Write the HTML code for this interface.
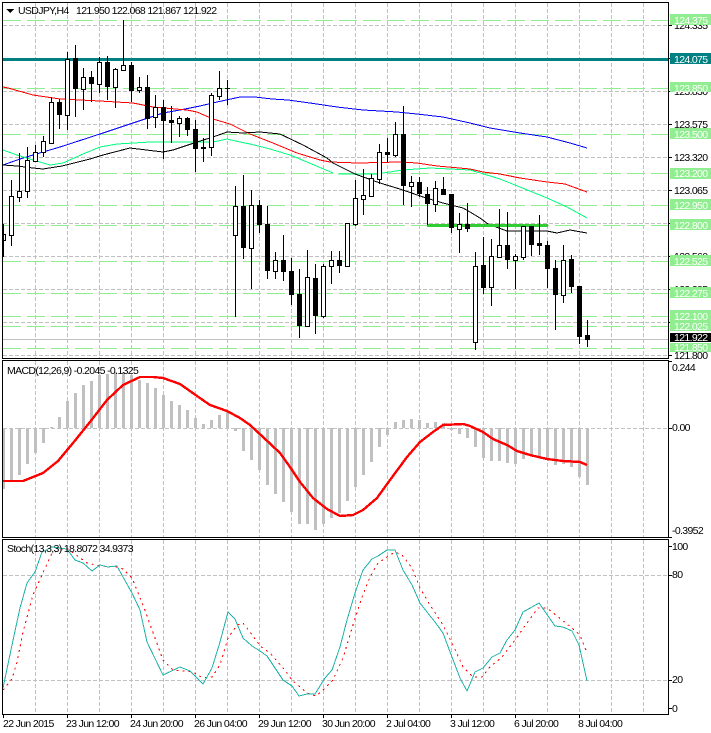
<!DOCTYPE html>
<html>
<head>
<meta charset="utf-8">
<style>
html,body{margin:0;padding:0;background:#fff;width:711px;height:733px;overflow:hidden}
svg{display:block}
text{font-family:"Liberation Sans",sans-serif;font-size:10.5px;letter-spacing:-.65px;fill:#000}
.w{fill:#fff}
</style>
</head>
<body>
<svg width="711" height="733" viewBox="0 0 711 733" xmlns="http://www.w3.org/2000/svg">
<rect width="711" height="733" fill="#fff"/>
<g shape-rendering="crispEdges" fill="none">
<!-- grids -->
<path stroke="#c0c0c0" stroke-dasharray="4 2" d="M3 25.5H668M3 58.5H668M3 91.5H668M3 124.5H668M3 157.5H668M3 190.5H668M3 223.5H668M3 256.5H668M3 289.5H668M3 322.5H668M3 355.5H668M3 428.5H668M3 575.5H668M3 680.5H668"/>
<path stroke="#c0c0c0" stroke-dasharray="4 2" d="M35.5 3V358M67.5 3V358M99.5 3V358M131.5 3V358M163.5 3V358M195.5 3V358M227.5 3V358M259.5 3V358M291.5 3V358M323.5 3V358M355.5 3V358M387.5 3V358M419.5 3V358M451.5 3V358M483.5 3V358M515.5 3V358M547.5 3V358M579.5 3V358M611.5 3V358M643.5 3V358M35.5 361V537M67.5 361V537M99.5 361V537M131.5 361V537M163.5 361V537M195.5 361V537M227.5 361V537M259.5 361V537M291.5 361V537M323.5 361V537M355.5 361V537M387.5 361V537M419.5 361V537M451.5 361V537M483.5 361V537M515.5 361V537M547.5 361V537M579.5 361V537M611.5 361V537M643.5 361V537M35.5 540V714M67.5 540V714M99.5 540V714M131.5 540V714M163.5 540V714M195.5 540V714M227.5 540V714M259.5 540V714M291.5 540V714M323.5 540V714M355.5 540V714M387.5 540V714M419.5 540V714M451.5 540V714M483.5 540V714M515.5 540V714M547.5 540V714M579.5 540V714M611.5 540V714M643.5 540V714"/>
<!-- horizontal objects -->
<path stroke="#90ee90" stroke-dasharray="18 6" d="M3 20.5H668M3 88.5H668M3 134.5H668M3 173.5H668M3 205.5H668M3 225.5H668M3 261.5H668M3 293.5H668M3 316.5H668M3 326.5H668M3 348.5H668"/>
<path stroke="#c0c0c0" d="M3 339.5H668"/>
<path stroke="#008080" stroke-width="3" d="M3 59.5H668"/>
<!-- moving averages -->
<polyline stroke="#0000ff" points="3,165 20,159 43,152 60,147 100,134 133,123 163,113 180,110 200,106 217,102 240,97 255,97 272,99 288,100 310,103 337,107 363,110 397,112 417,114 443,117 470,123 490,128 520,133 547,137 570,143 587,148"/>
<polyline stroke="#ff0000" points="3,87 8,88 33,95 60,99 100,101 133,103 153,107 187,110 197,112 213,119 230,124 240,129 250,134 273,143 297,153 320,160 330,162 358,163 400,162 417,163 437,166 470,169 483,172 500,174 520,178 547,182 565,184 587,192"/>
<polyline stroke="#00ff7f" points="3,150 17,155 33,160 50,165 63,163 83,154 100,147 117,144 150,142 187,142 213,142 227,139 240,142 250,144 270,149 290,155 307,162 333,173"/>
<polyline stroke="#00ff7f" points="338,174 375,174 383,173 403,170 430,168 470,170 487,175 500,179 520,187 547,198 567,207 587,218"/>
<polyline stroke="#000" points="3,165 17,166 33,168 43,169 62,166 90,159 103,155 130,148 163,152 173,150 197,142 213,137 227,132 243,133 260,132 280,134 303,145 327,158 333,163 355,174 380,183 403,190 423,197 443,203 463,208 470,212 480,218 488,224 507,231 547,231 557,233 570,230 587,233"/>
<path stroke="#32cd32" stroke-width="3" d="M427 225.5H548"/>
<!-- wicks -->
<path stroke="#000" d="M3.5 224V257M11.5 180V246M19.5 153V202M27.5 147V198M35.5 145V162M43.5 136V157M51.5 97V143M59.5 99V129M67.5 52V130M75.5 45V117M83.5 68V110M91.5 71V102M99.5 57V93M107.5 56V100M115.5 68V108M123.5 20V71M131.5 62V102M139.5 77V93M147.5 75V129M155.5 95V128M163.5 100V159M171.5 106V143M179.5 116V137M187.5 117V136M195.5 120V172M203.5 138V162M211.5 93V156M219.5 71V100M227.5 80V105M235.5 186V317M243.5 175V259M251.5 190V289M259.5 200V233M267.5 206V279M275.5 252V279M283.5 235V281M291.5 258V305M299.5 269V338M307.5 250V327M315.5 264V334M323.5 264V318M331.5 251V284M339.5 251V273M355.5 180V226M363.5 169V215M371.5 174V196M379.5 144V184M387.5 138V162M395.5 122V157M403.5 106V205M411.5 176V207M419.5 177V197M427.5 187V225M435.5 181V212M443.5 177V195M451.5 194V233M459.5 213V253M467.5 203V232M475.5 252V350M483.5 237V294M491.5 239V306M499.5 209V257M507.5 212V269M515.5 254V289M523.5 226V260M531.5 226V256M539.5 215V255M547.5 241V288M555.5 260V330M563.5 245V303M571.5 255V293M579.5 286V344M587.5 320V347"/>
<!-- white bodies -->
<path stroke="#000" fill="#fff" d="M3.5 234.5h2v6h-2zM9.5 196.5h4v39h-4zM17.5 191.5h4v6h-4zM25.5 160.5h4v31h-4zM33.5 152.5h4v9h-4zM41.5 141.5h4v11h-4zM49.5 102.5h4v41h-4zM65.5 59.5h4v56h-4zM81.5 77.5h4v12h-4zM97.5 62.5h4v22h-4zM113.5 69.5h4v18h-4zM121.5 65.5h4v5h-4zM137.5 87.5h4v3h-4zM153.5 107.5h4v10h-4zM177.5 118.5h4v5h-4zM209.5 95.5h4v52h-4zM217.5 88.5h4v8h-4zM233.5 206.5h4v29h-4zM249.5 205.5h4v43h-4zM273.5 260.5h4v11h-4zM305.5 277.5h4v49h-4zM321.5 266.5h4v50h-4zM329.5 260.5h4v6h-4zM345.5 223.5h4v43h-4zM353.5 198.5h4v26h-4zM361.5 195.5h4v4h-4zM369.5 178.5h4v18h-4zM377.5 152.5h4v27h-4zM393.5 134.5h4v21h-4zM409.5 182.5h4v4h-4zM433.5 188.5h4v16h-4zM457.5 224.5h4v5h-4zM473.5 266.5h4v76h-4zM489.5 256.5h4v31h-4zM497.5 245.5h4v12h-4zM513.5 256.5h4v4h-4zM521.5 226.5h4v31h-4zM561.5 260.5h4v35h-4z"/>
<!-- black bodies -->
<path fill="#000" d="M57 102h5v13h-5zM73 58h5v31h-5zM89 77h5v7h-5zM105 62h5v25h-5zM129 65h5v26h-5zM145 87h5v32h-5zM161 107h5v14h-5zM169 120h5v3h-5zM185 118h5v12h-5zM193 129h5v20h-5zM201 147h5v2h-5zM225 88h5v1h-5zM241 206h5v42h-5zM257 205h5v20h-5zM265 224h5v47h-5zM281 260h5v12h-5zM289 271h5v24h-5zM297 294h5v32h-5zM313 278h5v38h-5zM337 260h5v6h-5zM385 152h5v3h-5zM401 134h5v52h-5zM417 182h5v12h-5zM425 194h5v10h-5zM441 189h5v6h-5zM449 194h5v34h-5zM465 224h5v5h-5zM481 265h5v23h-5zM505 245h5v15h-5zM529 226h5v19h-5zM537 243h5v3h-5zM545 245h5v24h-5zM553 268h5v27h-5zM569 259h5v28h-5zM577 286h5v51h-5zM585 335h5v5h-5z"/>
<!-- MACD histogram -->
<path stroke="#c0c0c0" stroke-width="3" d="M3.5 428V489M11.5 428V480M19.5 428V475M27.5 428V464M35.5 428V453M43.5 428V443M51.5 427V428M59.5 417V428M67.5 401V428M75.5 393V428M83.5 385V428M91.5 381V428M99.5 375V428M107.5 374V428M115.5 372V428M123.5 372V428M131.5 375V428M139.5 380V428M147.5 383V428M155.5 388V428M163.5 395V428M171.5 401V428M179.5 405V428M187.5 410V428M195.5 418V428M203.5 424V428M211.5 420V428M219.5 415V428M227.5 411V428M235.5 428V431M243.5 428V451M251.5 428V460M259.5 428V470M267.5 428V485M275.5 428V494M283.5 428V502M291.5 428V512M299.5 428V524M307.5 428V524M315.5 428V530M323.5 428V524M331.5 428V518M339.5 428V513M347.5 428V501M355.5 428V487M363.5 428V475M371.5 428V462M379.5 428V447M387.5 428V435M395.5 422V428M403.5 420V428M411.5 419V428M419.5 420V428M427.5 423V428M435.5 422V428M443.5 423V428M451.5 428V430M459.5 428V434M467.5 428V438M475.5 428V447M483.5 428V458M491.5 428V461M499.5 428V461M507.5 428V463M515.5 428V464M523.5 428V459M531.5 428V455M539.5 428V457M547.5 428V460M555.5 428V465M563.5 428V464M571.5 428V467M579.5 428V477M587.5 428V485"/>
<polyline stroke="#ff0000" stroke-width="2.4" stroke-linejoin="round" points="3,481 23,481 43,473 58,461 73,443 90,422 107,400 123,385 140,377 153,377 163,378 180,384 197,396 210,405 227,411 240,418 250,425 263,437 280,453 290,467 300,482 313,498 327,509 340,516 353,515 363,510 377,498 390,480 407,457 420,442 433,432 443,425 463,424 470,426 483,432 493,439 507,445 517,451 530,455 547,459 563,461 580,462 587,465"/>
<!-- Stochastic -->
<polyline stroke="#ff0000" stroke-dasharray="2 4" points="3,690 12,679 17,662 23,632 33,595 42,575 52,553 60,550 68,549 87,563 100,566 117,567 123,569 132,578 143,605 163,660 173,670 193,672 203,678 212,677 220,665 228,638 237,625 243,623 250,632 260,646 270,653 283,668 293,681 307,693 316,696 323,690 333,680 343,658 353,625 362,597 370,577 378,563 387,557 395,552 402,555 412,568 420,588 430,605 443,625 453,645 463,667 473,677 482,677 490,667 502,657 515,640 527,623 538,608 547,608 567,624 580,635 587,653"/>
<polyline stroke="#20b2aa" points="3,688 12,645 20,608 27,583 35,572 42,552 52,547 67,549 75,560 83,563 92,571 100,565 108,567 117,566 123,577 132,593 140,610 147,642 163,675 180,667 190,671 203,684 212,668 220,642 228,612 235,619 243,638 252,646 260,651 267,656 283,680 292,686 299,696 307,694 315,694 325,678 332,670 340,647 347,620 355,593 363,570 372,559 378,556 387,550 395,550 403,570 412,585 420,603 427,612 435,622 443,633 452,657 460,678 467,691 470,684 475,672 483,668 492,657 500,653 507,640 515,630 523,612 532,607 539,603 555,626 563,627 572,631 579,645 587,681"/>
<!-- panel borders -->
<path stroke="#000" d="M2.5 2.5H668.5V358.5H2.5ZM2.5 360.5H668.5V537.5H2.5ZM2.5 539.5H668.5V714.5H2.5Z"/>
<!-- axis ticks -->
<path stroke="#000" d="M668 25.5h4M668 58.5h4M668 91.5h4M668 124.5h4M668 157.5h4M668 190.5h4M668 223.5h4M668 256.5h4M668 289.5h4M668 322.5h4M668 355.5h4M668 428.5h4M668 361.5h4M668 537.5h4M668 575.5h4M668 680.5h4M668 708.5h4M668 546.5h4M3.5 714v4M67.5 714v4M131.5 714v4M195.5 714v4M259.5 714v4M323.5 714v4M387.5 714v4M451.5 714v4M515.5 714v4M579.5 714v4"/>
<path fill="#000" d="M6 9h8l-4 4z"/>
</g>
<!-- chart text -->
<text x="18" y="14">USDJPY,H4</text>
<text x="76" y="14">121.950 122.068 121.867 121.922</text>
<text x="7" y="374">MACD(12,26,9) -0.2045 -0.1325</text>
<text x="7" y="552">Stoch(13,3,3) 18.8072 34.9373</text>
<!-- price axis -->
<text x="674" y="29">124.335</text>
<text x="674" y="95">123.830</text>
<text x="674" y="128">123.575</text>
<text x="674" y="161">123.320</text>
<text x="674" y="194">123.065</text>
<text x="674" y="260">122.560</text>
<text x="674" y="293">122.285</text>
<text x="674" y="359">121.800</text>
<g shape-rendering="crispEdges">
<rect x="670" y="14" width="41" height="11" fill="#90ee90"/>
<rect x="670" y="53" width="41" height="11" fill="#008080"/>
<rect x="670" y="82" width="41" height="10" fill="#90ee90"/>
<rect x="670" y="128" width="41" height="11" fill="#90ee90"/>
<rect x="670" y="168" width="41" height="11" fill="#90ee90"/>
<rect x="670" y="199" width="41" height="11" fill="#90ee90"/>
<rect x="670" y="219" width="41" height="11" fill="#90ee90"/>
<rect x="670" y="255" width="41" height="11" fill="#90ee90"/>
<rect x="670" y="287" width="41" height="11" fill="#90ee90"/>
<rect x="670" y="310" width="41" height="11" fill="#90ee90"/>
<rect x="670" y="321" width="41" height="10" fill="#90ee90"/>
<rect x="670" y="333" width="41" height="9" fill="#000"/>
<rect x="670" y="343" width="41" height="9" fill="#90ee90"/>
</g>
<text class="w" x="674" y="24">124.375</text>
<text class="w" x="674" y="63">124.075</text>
<text class="w" x="674" y="92">123.850</text>
<text class="w" x="674" y="138">123.500</text>
<text class="w" x="674" y="177">123.200</text>
<text class="w" x="674" y="209">122.950</text>
<text class="w" x="674" y="229">122.800</text>
<text class="w" x="674" y="265">122.525</text>
<text class="w" x="674" y="297">122.275</text>
<text class="w" x="674" y="320">122.100</text>
<text class="w" x="674" y="330">122.025</text>
<text class="w" x="674" y="341">121.922</text>
<text class="w" x="674" y="351">121.850</text>
<!-- indicator axes -->
<text x="672" y="371">0.244</text>
<text x="672" y="431">0.00</text>
<text x="672" y="534">-0.3952</text>
<text x="672" y="550">100</text>
<text x="672" y="578">80</text>
<text x="672" y="683">20</text>
<text x="672" y="712">0</text>
<!-- time axis -->
<text x="3" y="727">22 Jun 2015</text>
<text x="66" y="727">23 Jun 12:00</text>
<text x="130" y="727">24 Jun 20:00</text>
<text x="194" y="727">26 Jun 04:00</text>
<text x="258" y="727">29 Jun 12:00</text>
<text x="322" y="727">30 Jun 20:00</text>
<text x="386" y="727">2 Jul 04:00</text>
<text x="450" y="727">3 Jul 12:00</text>
<text x="514" y="727">6 Jul 20:00</text>
<text x="578" y="727">8 Jul 04:00</text>
</svg>
</body>
</html>
